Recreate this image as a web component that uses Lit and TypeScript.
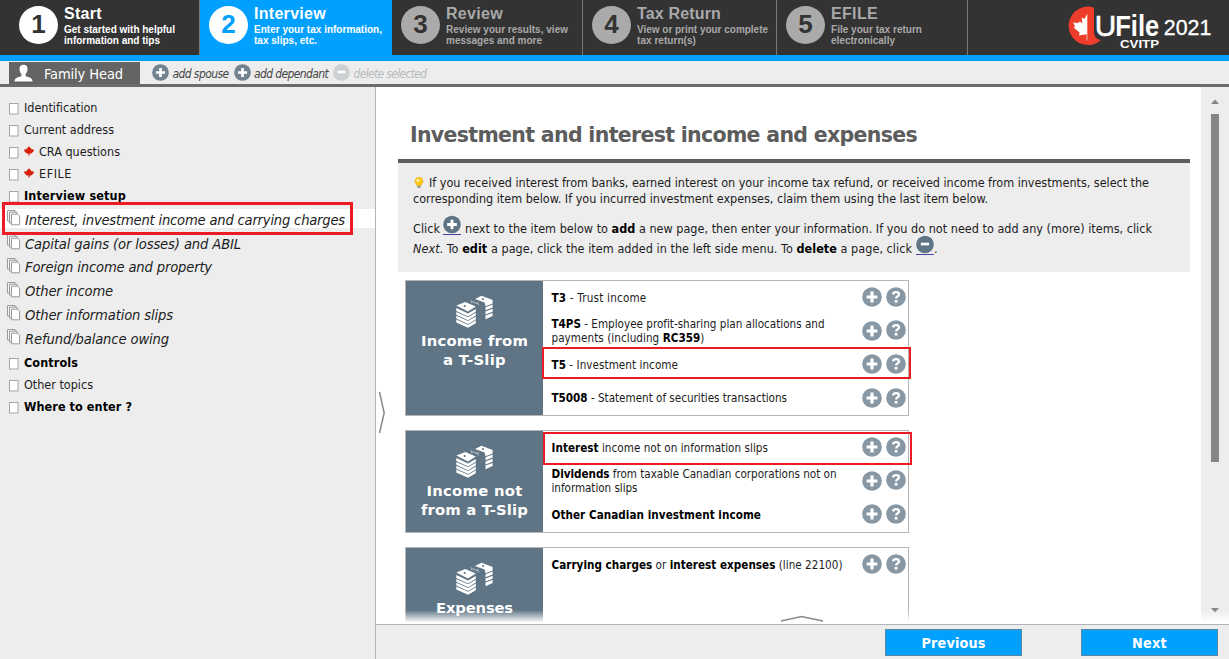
import { LitElement, html, css, svg, nothing } from "lit";
import { customElement, property } from "lit/decorators.js";
import { classMap } from "lit/directives/class-map.js";

/** One line of text whose tracking is adjusted so that it fills a given width. */
@customElement("fit-line")
class FitLine extends LitElement {
  static styles = css`
    :host { display: inline-block; white-space: nowrap; }
  `;
  @property({ type: Number }) w = 0;
  firstUpdated() {
    const n = (this.textContent || "").trim().length;
    const natural = this.getBoundingClientRect().width;
    if (n && this.w) this.style.letterSpacing = `${(this.w - natural) / n}px`;
  }
  render() {
    return html`<slot></slot>`;
  }
}

const steps = [
  { n: "1", t: "Start", tw: 38, a: "Get started with helpful", aw: 111, b: "information and tips", bw: 96 },
  { n: "2", t: "Interview", tw: 72, a: "Enter your tax information,", aw: 128, b: "tax slips, etc.", bw: 63 },
  { n: "3", t: "Review", tw: 57, a: "Review your results, view", aw: 122, b: "messages and more", bw: 96 },
  { n: "4", t: "Tax Return", tw: 84, a: "View or print your complete", aw: 131, b: "tax return(s)", bw: 59 },
  { n: "5", t: "EFILE", tw: 47, a: "File your tax return", aw: 91, b: "electronically", bw: 64 },
];

const menu = [
  { t: "Identification", w: 73.5 },
  { t: "Current address", w: 90 },
  { t: "CRA questions", w: 81, leaf: true },
  { t: "EFILE", w: 33, leaf: true },
  { t: "Interview setup", w: 102, bold: true },
  { t: "Interest, investment income and carrying charges", w: 320, group: true, on: true },
  { t: "Capital gains (or losses) and ABIL", w: 216, group: true },
  { t: "Foreign income and property", w: 187, group: true },
  { t: "Other income", w: 88, group: true },
  { t: "Other information slips", w: 148, group: true },
  { t: "Refund/balance owing", w: 144, group: true, last: true },
  { t: "Controls", w: 54, bold: true },
  { t: "Other topics", w: 69 },
  { t: "Where to enter ?", w: 108, bold: true },
];

const cards = [
  {
    cls: "c1",
    title: [["Income from", 107], ["a T-Slip", 63]],
    rows: [
      [html`<fit-line w="95"><b>T3</b> - Trust income</fit-line>`],
      [
        html`<fit-line w="273"><b>T4PS</b> - Employee profit-sharing plan allocations and</fit-line>`,
        html`<fit-line w="153">payments (including <b>RC359</b>)</fit-line>`,
      ],
      [html`<fit-line w="126.5"><b>T5</b> - Investment income</fit-line>`],
      [html`<fit-line w="235.5"><b>T5008</b> - Statement of securities transactions</fit-line>`],
    ],
  },
  {
    cls: "c2",
    title: [["Income not", 96], ["from a T-Slip", 107]],
    rows: [
      [html`<fit-line w="216.5"><b>Interest</b> income not on information slips</fit-line>`],
      [
        html`<fit-line w="285"><b>Dividends</b> from taxable Canadian corporations not on</fit-line>`,
        html`<fit-line w="86">information slips</fit-line>`,
      ],
      [html`<fit-line w="209.5"><b>Other Canadian investment income</b></fit-line>`],
    ],
  },
  {
    cls: "c3",
    title: [["Expenses", 77]],
    rows: [[html`<fit-line w="291"><b>Carrying charges</b> or <b>interest expenses</b> (line 22100)</fit-line>`]],
  },
];

const plusIcon = (c: string) => html`<svg class=${c} viewBox="0 0 20 20">
  <circle cx="10" cy="10" r="9.8" fill="currentColor" />
  <path d="M10 4.6V15.4M4.6 10H15.4" stroke="#fff" stroke-width="3.2" />
</svg>`;
const minusIcon = (c: string) => html`<svg class=${c} viewBox="0 0 20 20">
  <circle cx="10" cy="10" r="9.8" fill="currentColor" />
  <path d="M5.4 9.5H14.6" stroke="#fff" stroke-width="3" />
</svg>`;
const helpIcon = html`<svg class="ic help" viewBox="0 0 20 20">
  <circle cx="10" cy="10" r="9.8" fill="currentColor" />
  <path d="M6.9 7.4C7.3 5.8 8.6 5.2 10 5.2C11.8 5.2 13 6.1 13 7.4C13 9.2 10.1 9.2 10.1 11.6" fill="none" stroke="#fff" stroke-width="2.3" />
  <rect x="8.7" y="13" width="2.8" height="2.6" fill="#fff" />
</svg>`;
const bill = (y: number) => svg`<path d="M0.3 ${y}L12 ${y + 5.3}L19.8 ${y + 0.8}V${y + 3.7}L12 ${y + 8.3}L0.3 ${y + 2.9}Z" />`;
const moneyIcon = html`<svg class="money" viewBox="0 0 38 34" fill="#fff">
  <path d="M0.3 10.5L9.3 7L19.8 11.4L12 16.6Z" />
  ${[13.1, 16.9, 20.7, 24.5].map(bill)}
  <circle cx="8.7" cy="11" r="1.1" fill="#5f7586" />
  <path d="M19 4L25.5 0.7L36.6 5V8.4L29.5 11.2L28.6 7.6Z" />
  <circle cx="27" cy="4.1" r="1" fill="#5f7586" />
  <path d="M29.5 12.2L36.6 9.5V12.5L29.5 15.3ZM29.5 16.4L36.6 13.7V16.7L29.5 19.5ZM29.5 20.6L36.6 17.9V20.9L29.5 24.2Z" />
  <path d="M15.5 8.2C15.5 6.6 17.2 6.3 18.4 7.4C19.7 8.7 21.9 8.8 22 7M14.8 5.4L16.4 7.6M22.8 10.2L21.4 7.8" fill="none" stroke="#a9b6c0" stroke-width="1.1" />
</svg>`;
const pageIcon = html`<svg class="page" viewBox="0 0 10 12">
  <rect x="0.5" y="0.5" width="8.5" height="10.5" fill="#fff" stroke="#a5a5a5" />
</svg>`;
const pagesIcon = html`<svg class="pages" viewBox="0 0 14 16" fill="#f8f8f8" stroke="#9a9a9a">
  <path d="M0.5 0.5H8V11H0.5Z" /><path d="M2.5 2.2H10V13H2.5Z" />
  <path d="M4.5 4.2H10.6L12.6 6.2V14.8H4.5Z" fill="#fff" />
</svg>`;
const leafIcon = html`<svg class="leaf" viewBox="0 0 10 10">
  <path d="M5 0L6.2 2L7.2 1.8L7.1 3.3L9.9 3.4L9.4 5.4L7.2 7.6H5.6V9.6H4.4V7.6H2.8L0.6 5.4L0.1 3.4L2.9 3.3L2.8 1.8L3.8 2Z" fill="#d81e05" />
</svg>`;
const bulbIcon = html`<svg class="bulb" viewBox="0 0 10 12">
  <path d="M5 0.4A4 4 0 0 0 1 4.4C1 6.6 3 7 3.2 8.8H6.8C7 7 9 6.6 9 4.4A4 4 0 0 0 5 0.4Z" fill="#fdc70c" stroke="#e0a61b" stroke-width="0.6" />
  <circle cx="3.9" cy="3.3" r="1.5" fill="#fff3a8" />
  <rect x="3.3" y="8.8" width="3.4" height="2.2" fill="#9b9b9b" />
</svg>`;

@customElement("app-root")
class AppRoot extends LitElement {
  static styles = css`
    :host {
      display: flex; flex-direction: column; position: relative;
      width: 1229px; height: 659px; overflow: hidden; background: #fff; color: #1c1c1c;
      font-family: "DejaVu Sans Condensed", "DejaVu Sans", sans-serif;
      font-stretch: condensed; font-size: 12.5px;
    }
    * { box-sizing: border-box; }
    svg { display: block; flex: none; }
    .top { display: grid; grid-template-columns: 200px 192px 191px 194px 191px 1fr; height: 61px; background: #333; border-bottom: 6px solid #00a0ff; font-family: "Liberation Sans", Arial, sans-serif; font-weight: bold; }
    .step { display: flex; gap: 6px; padding-left: 9px; color: #a9a9a9; border-right: 1px solid #777; }
    .step.s1 { padding-left: 19px; color: #fff; }
    .step.s2 { background: #00a0ff; color: #fff; border-color: #00a0ff; }
    .num { width: 39px; height: 38px; margin-top: 6px; border-radius: 50%; background: #aaa; color: #333; font-size: 26px; line-height: 37px; text-align: center; }
    .s1 .num { background: #fff; }
    .s2 .num { background: #fff; color: #00a0ff; }
    .words { display: flex; flex-direction: column; align-items: flex-start; padding-top: 5px; font-size: 10px; line-height: 11px; }
    .head { font-size: 16px; line-height: 18px; margin-bottom: 1px; }
    .brand { margin: 5px 0 0 98px; width: 150px; height: 46px; }

    .people { display: flex; align-items: center; height: 26px; padding-left: 9px; background: #ededed; border-bottom: 3px solid #6b6b6b; font-style: italic; font-size: 12px; color: #444; }
    .tab { display: flex; align-items: center; gap: 11px; width: 131px; height: 22px; margin: 1px 12px 0 0; padding-left: 5px; background: #646464; color: #fff; font-style: normal; font-size: 14.5px; }
    .tab fit-line { margin-top: 2px; }
    .head-ic { width: 19px; height: 18px; }
    .people > fit-line { margin-top: 2px; }
    .mini { width: 17px; height: 17px; color: #70838f; margin-right: 3.5px; }
    .people .sp { margin-right: 5px; }
    .dim { color: #b7bbbe; }
    .mini.dim { color: #cdd1d3; }

    .body { display: grid; grid-template-columns: 376px 1fr; height: 572px; }
    .side { display: flex; flex-direction: column; background: #ededed; border-right: 1px solid #b1b3b6; padding-top: 9px; }
    .item { display: flex; align-items: center; height: 22px; padding-left: 9px; font-size: 12.5px; flex: none; }
    .item.bold { font-weight: bold; color: #000; }
    .item.group { height: 23.8px; padding-left: 7px; font-size: 14.6px; font-style: italic; }
    .item.on { margin-top: 1.4px; background: linear-gradient(#ededed 2px, #fff 2px, #fff 21px, #ededed 21px); }
    .item.last { margin-bottom: 1px; }
    .page { width: 10px; height: 12px; margin: 3px 5px 0 0; }
    .pages { width: 14px; height: 16px; margin: -2px 4px 0 0; }
    .leaf { width: 10px; height: 10px; margin: 0 5px 0 0; }

    .right { display: grid; grid-template-rows: 537px 35px; min-width: 0; }
    .view { position: relative; display: grid; grid-template-columns: 825px 28px; overflow: hidden; min-height: 0; }
    .page-body { padding-left: 22px; min-height: 0; height: 537px; overflow: hidden; }
    h1 { margin: 0; padding: 34px 0 0 12px; height: 72px; font: bold 20.5px/28px "DejaVu Sans", sans-serif; font-stretch: normal; color: #5c5c5c; }
    .info { width: 792px; height: 113px; border-top: 4px solid #5e5e5e; background: #ededed; padding: 12px 0 0 15px; }
    .ln { display: flex; align-items: center; height: 15.5px; }
    .ln.p { height: 20px; }
    .ln.first { margin-top: 12.5px; }
    .ln b { color: #000; }
    .bulb { width: 10px; height: 12px; margin: 0 5px 0 1px; }
    .lk { margin: -8px 4px 0 3px; border-bottom: 1px solid #4b3fa8; color: #5f7586; }
    .lk.m { margin: -7px 0 0 4px; }
    .big { width: 18px; height: 19px; }

    .card { display: grid; grid-template-columns: 137px 1fr; width: 503.5px; border: 1px solid #b5b5b5; margin: 0 0 14px 7px; font-size: 11.6px; }
    .c1 { height: 136px; margin-top: 8px; }
    .c2 { height: 103px; }
    .c3 { height: 120px; }
    .cat { display: flex; flex-direction: column; align-items: center; background: #5f7586; color: #fff; padding-top: 14px; font: bold 14.8px/19px "DejaVu Sans", sans-serif; font-stretch: normal; }
    .money { width: 38px; height: 34px; margin-bottom: 2px; }
    .rows { display: flex; flex-direction: column; padding: 0 2px 0 8.5px; }
    .row { display: flex; align-items: center; height: 33.6px; }
    .txt { flex: 1; display: flex; flex-direction: column; line-height: 14.4px; }
    .row b { color: #000; }
    .ic { width: 20px; height: 20px; color: #8797a3; margin: -1px 0 0 3.7px; }
    .help { margin-top: -2px; }

    .bar { display: flex; flex-direction: column; align-items: center; background: #ededed; padding: 12px 0 11px; }
    .thumb { width: 8px; height: 348px; background: #868686; margin-top: 10px; }
    .up, .down { width: 8px; height: 5px; fill: #868686; }
    .down { margin-top: auto; }
    .fade { position: absolute; left: 0; right: 0; bottom: 0; height: 14px; background: linear-gradient(rgba(255,255,255,0), #fff 90%); }
    .side-arrow { position: absolute; left: 2px; top: 304px; width: 8px; height: 44px; }
    .up-arrow { position: absolute; left: 404px; top: 528px; width: 44px; height: 8px; }

    .foot { display: flex; align-items: flex-start; padding: 4px 0 0 509px; gap: 59px; background: #ededed; border-top: 1px solid #aeb4ba; }
    .btn { width: 137px; height: 27px; padding: 0; border: 1px solid #5c87a4; background: #00a0ff; color: #fff; font: bold 14.3px/22px "DejaVu Sans Condensed", "DejaVu Sans", sans-serif; }

    .mark { position: absolute; border: 3px solid #eb1c24; }
    .m1 { left: 2px; top: 202px; width: 351px; height: 33px; }
    .m2 { left: 542px; top: 347px; width: 369px; height: 32px; border-width: 2px; }
    .m3 { left: 543px; top: 432px; width: 369px; height: 33px; border-width: 2px; }
  `;

  renderBrand() {
    return html`<svg class="brand" viewBox="1066 5 150 46" font-family="Liberation Sans, Arial, sans-serif" fill="#fff">
      <path d="M1094 7.6C1091.8 6.9 1089.4 6.5 1087.5 6.5A19.3 19.3 0 1 0 1101 40C1096 39.4 1094 36 1094 31Z" fill="#ee3d2b" />
      <path d="M1087.3 13.8L1084.4 19L1081.6 17.4L1082.5 23.4L1079.6 21.2L1078.6 23L1073.2 22.4L1075 26.6L1073.8 27.8L1079.6 32.6L1079 35.4L1086.7 34.2V40.5H1087.3Z" />
      <text x="1094.8" y="35.8" font-size="30" textLength="21.5" lengthAdjust="spacingAndGlyphs" font-weight="400" stroke="#fff" stroke-width="0.6">U</text>
      <text x="1115.2" y="35.8" font-size="30" textLength="44" lengthAdjust="spacingAndGlyphs" font-weight="700">File</text>
      <text x="1120" y="47.5" font-size="11.8" textLength="39" lengthAdjust="spacingAndGlyphs" font-weight="700">CVITP</text>
      <text x="1163.8" y="35.3" font-size="21.5" textLength="47.5" lengthAdjust="spacingAndGlyphs" font-weight="400" stroke="#fff" stroke-width="0.3">2021</text>
    </svg>`;
  }

  render() {
    return html`
      <header class="top">
        ${steps.map(
          (s) => html`<div class="step s${s.n}">
            <div class="num">${s.n}</div>
            <div class="words">
              <fit-line class="head" .w=${s.tw}>${s.t}</fit-line>
              <fit-line .w=${s.aw}>${s.a}</fit-line>
              <fit-line .w=${s.bw}>${s.b}</fit-line>
            </div>
          </div>`
        )}
        ${this.renderBrand()}
      </header>
      <nav class="people">
        <div class="tab">
          <svg class="head-ic" viewBox="0 0 19 18" fill="#fff">
            <path d="M9.5 0.8C12.3 0.8 13.7 2.8 13.5 5.4C13.3 7.6 12.6 9 11.6 10V12C13 13.2 18.3 13 18.6 17.4H0.4C0.7 13 6 13.2 7.4 12V10C6.4 9 5.7 7.6 5.5 5.4C5.3 2.8 6.7 0.8 9.5 0.8Z" />
          </svg>
          <fit-line w="79">Family Head</fit-line>
        </div>
        ${plusIcon("mini")}<fit-line class="sp" w="56">add spouse</fit-line>
        ${plusIcon("mini")}<fit-line class="sp" w="74">add dependant</fit-line>
        ${minusIcon("mini dim")}<fit-line class="dim" w="73">delete selected</fit-line>
      </nav>
      <div class="body">
        <aside class="side">
          ${menu.map(
            (m) => html`<div class=${classMap({ item: true, bold: !!m.bold, group: !!m.group, on: !!m.on, last: !!m.last })}>
              ${m.group ? pagesIcon : pageIcon}${m.leaf ? leafIcon : nothing}<fit-line .w=${m.w}>${m.t}</fit-line>
            </div>`
          )}
        </aside>
        <main class="right">
          <div class="view">
            <div class="page-body">
              <h1><fit-line w="507">Investment and interest income and expenses</fit-line></h1>
              <section class="info">
                <div class="ln">${bulbIcon}<fit-line w="720">If you received interest from banks, earned interest on your income tax refund, or received income from investments, select the</fit-line></div>
                <div class="ln"><fit-line w="575">corresponding item below. If you incurred investment expenses, claim them using the last item below.</fit-line></div>
                <div class="ln p first"><fit-line w="27">Click</fit-line><span class="lk">${plusIcon("big")}</span><fit-line w="687">next to the item below to <b>add</b> a new page, then enter your information. If you do not need to add any (more) items, click</fit-line></div>
                <div class="ln p"><fit-line w="499"><i>Next</i>. To <b>edit</b> a page, click the item added in the left side menu. To <b>delete</b> a page, click</fit-line><span class="lk m">${minusIcon("big")}</span>.</div>
              </section>
              ${cards.map(
                (c) => html`<section class="card ${c.cls}">
                  <div class="cat">${moneyIcon}${c.title.map(([t, w]) => html`<fit-line .w=${w}>${t}</fit-line>`)}</div>
                  <div class="rows">
                    ${c.rows.map((r) => html`<div class="row"><div class="txt">${r.map((l) => html`<div>${l}</div>`)}</div>${plusIcon("ic")}${helpIcon}</div>`)}
                  </div>
                </section>`
              )}
            </div>
            <div class="bar">
              <svg class="up" viewBox="0 0 8 5"><path d="M0 5L4 0.5L8 5Z" /></svg>
              <div class="thumb"></div>
              <svg class="down" viewBox="0 0 8 5"><path d="M0 0L4 4.5L8 0Z" /></svg>
            </div>
            <div class="fade"></div>
            <svg class="side-arrow" viewBox="0 0 8 44" fill="none" stroke="#8a8a8a" stroke-width="1.5"><path d="M1.5 1L6.2 22L1.5 42" /></svg>
            <svg class="up-arrow" viewBox="0 0 44 8" fill="none" stroke="#8a8a8a" stroke-width="1.5"><path d="M1 6L21.5 1.5L43 6" /></svg>
          </div>
          <footer class="foot">
            <button class="btn"><fit-line w="64">Previous</fit-line></button>
            <button class="btn"><fit-line w="35">Next</fit-line></button>
          </footer>
        </main>
      </div>
      <div class="mark m1"></div>
      <div class="mark m2"></div>
      <div class="mark m3"></div>
    `;
  }
}
